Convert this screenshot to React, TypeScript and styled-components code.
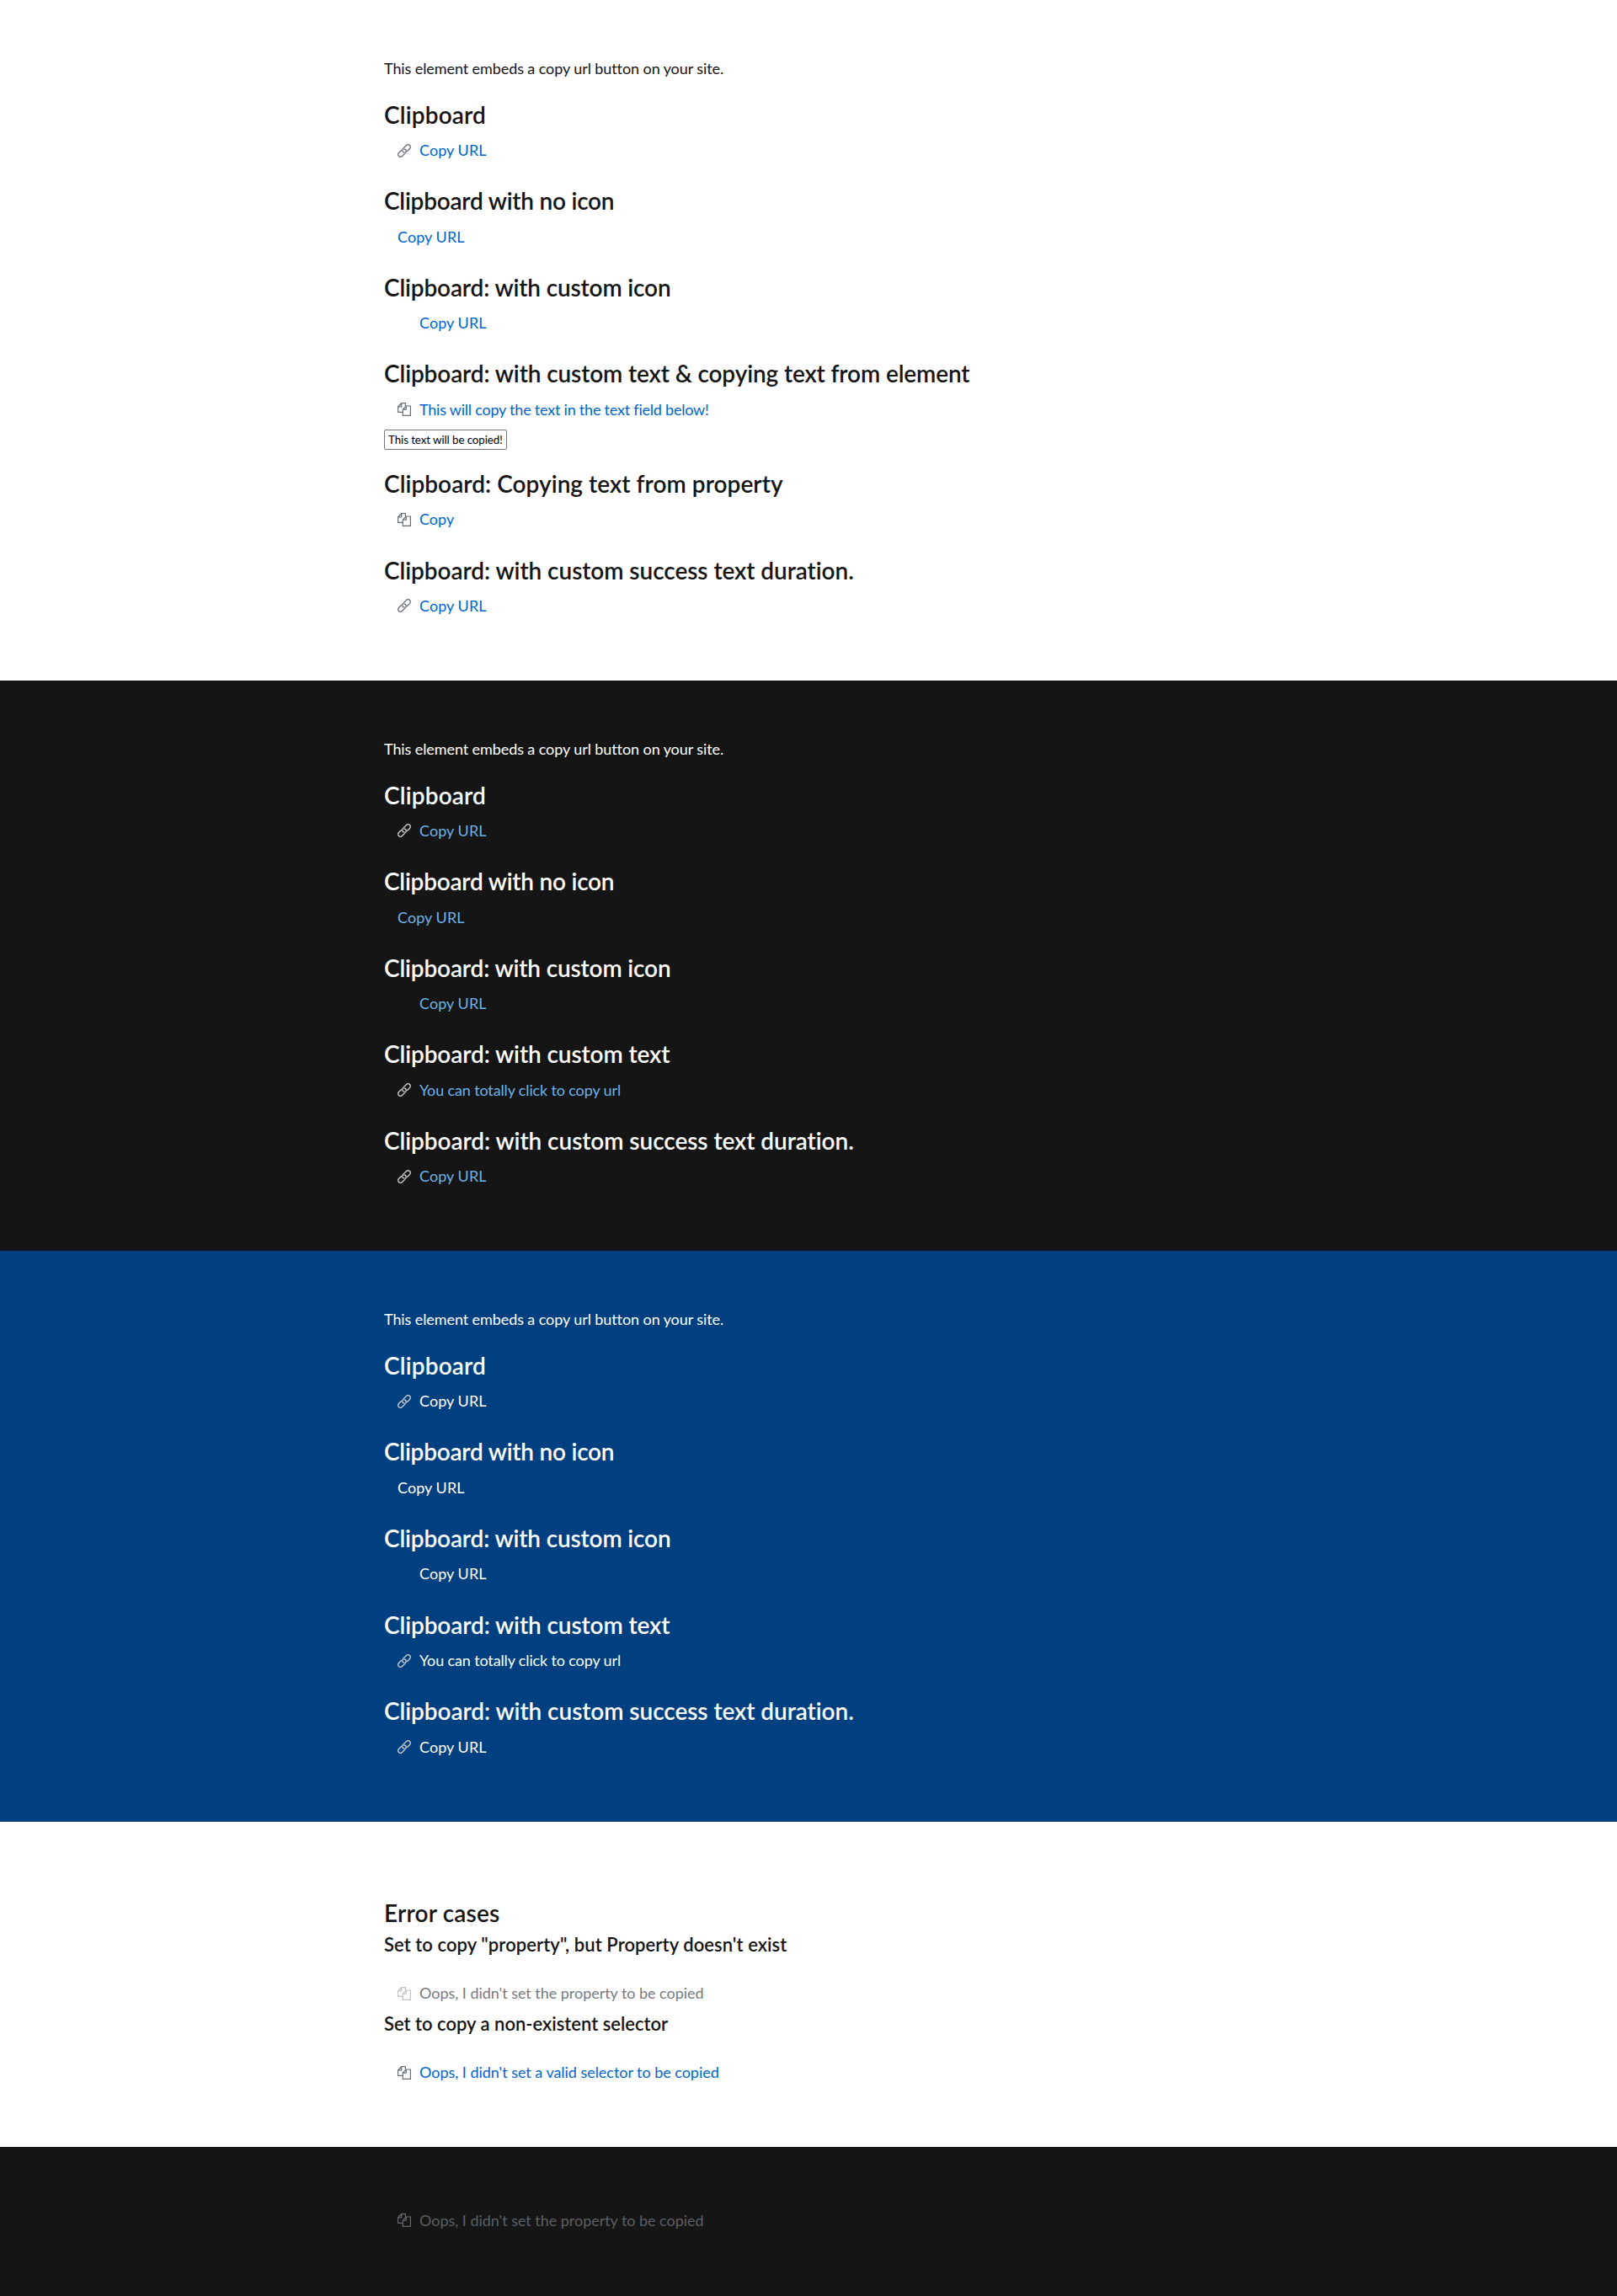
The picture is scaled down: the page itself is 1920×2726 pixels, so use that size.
import React from "react";
import styled, { createGlobalStyle, ThemeProvider } from "styled-components";

interface Palette {
  surface: string;
  text: string;
  link: string;
  icon: string;
  disabledText: string;
  disabledIcon: string;
}

const light: Palette = {
  surface: "#ffffff",
  text: "#151515",
  link: "#0066cc",
  icon: "#6a6e73",
  disabledText: "#787b80",
  disabledIcon: "#c3c5c7",
};

const dark: Palette = {
  surface: "#151515",
  text: "#ffffff",
  link: "#6cb2ea",
  icon: "#d2d2d2",
  disabledText: "#5c5f64",
  disabledIcon: "#66686b",
};

const saturated: Palette = {
  surface: "#004080",
  text: "#ffffff",
  link: "#ffffff",
  icon: "#d2d2d2",
  disabledText: "#d2d2d2",
  disabledIcon: "#d2d2d2",
};

const GlobalStyle = createGlobalStyle`
  *, *::before, *::after { box-sizing: border-box; }
  body {
    margin: 0;
    background: #ffffff;
    font-family: Lato, "Liberation Sans", sans-serif;
    font-size: 18px;
    line-height: 27px;
  }
`;

const Page = styled.main`
  display: flex;
  flex-direction: column;
`;

const Band = styled.section<{ $top: number; $bottom: number }>`
  display: flex;
  justify-content: center;
  padding: ${(p) => p.$top}px 16px ${(p) => p.$bottom}px;
  background: ${(p) => (p.theme as Palette).surface};
  color: ${(p) => (p.theme as Palette).text};
`;

const Container = styled.div`
  display: flex;
  flex-direction: column;
  align-items: flex-start;
  width: 1008px;
`;

const Intro = styled.p`
  margin: 0 0 22.7px;
  letter-spacing: -0.09px;
`;

const Example = styled.div<{ $after?: number }>`
  display: flex;
  flex-direction: column;
  align-items: flex-start;
  margin-bottom: ${(p) => p.$after ?? 28.2}px;
`;

const Heading = styled.h2<{ $track?: number }>`
  margin: 0;
  font-size: 28px;
  font-weight: 600;
  line-height: 36.4px;
  letter-spacing: ${(p) => p.$track ?? 0}px;
  white-space: nowrap;
`;

const SubHeading = styled.h3<{ $track?: number }>`
  margin: 0 0 29.3px;
  font-size: 22px;
  font-weight: 600;
  line-height: 30px;
  letter-spacing: ${(p) => p.$track ?? 0}px;
  white-space: nowrap;
`;

const CopyButton = styled.button<{ $track?: number }>`
  display: flex;
  align-items: center;
  gap: 10px;
  margin: 0;
  padding: 0 16px;
  border: 0;
  background: transparent;
  color: ${(p) => (p.theme as Palette).link};
  font: inherit;
  letter-spacing: ${(p) => p.$track ?? 0}px;
  white-space: nowrap;
  cursor: pointer;

  &:disabled {
    color: ${(p) => (p.theme as Palette).disabledText};
    cursor: default;
  }

  ${Heading} + & {
    margin-top: 11px;
  }
`;

const IconSlot = styled.span`
  display: block;
  width: 16px;
  height: 16px;
  color: ${(p) => (p.theme as Palette).icon};

  ${CopyButton}:disabled & {
    color: ${(p) => (p.theme as Palette).disabledIcon};
  }

  svg {
    display: block;
    width: 16px;
    height: 16px;
    fill: none;
    stroke: currentColor;
    overflow: visible;
  }
`;

const TextField = styled.input`
  width: 146px;
  height: 24px;
  margin: 10.3px 0 0;
  padding: 1px 4px;
  border: 1px solid #767676;
  border-radius: 2px;
  background: #ffffff;
  color: #000000;
  font-family: inherit;
  font-size: 13.333px;
  letter-spacing: -0.08px;
`;

const ErrorCase = styled.div`
  display: flex;
  flex-direction: column;
  align-items: flex-start;
  margin-top: 4.8px;

  & + & {
    margin-top: 8px;
  }
`;

const LinkIcon = () => (
  <svg viewBox="0 0 16 16" strokeWidth="1.3" strokeLinecap="round">
    <g transform="translate(8 8) rotate(-45)">
      <path d="M2.2 2.8H6.4A2.8 2.8 0 0 0 6.4-2.8H.6A2.8 2.8 0 0 0-2 .6Q-1.8 1.1-1.2 1.2" />
      <path d="M-2.2-2.8H-6.4A2.8 2.8 0 0 0-6.4 2.8H-.6A2.8 2.8 0 0 0 2-.6Q1.8-1.1 1.2-1.2" />
    </g>
  </svg>
);

const CopyIcon = () => (
  <svg viewBox="0 0 16 16" strokeWidth="1.2">
    <path d="M9.4 4.2V.6H4.7L.6 4.8V11.4H6M.6 4.8H4.7V.6" />
    <path d="M6.3 8.2 10.3 4H15.4V15.4H6.3ZM6.3 8.2H10.3V4" />
  </svg>
);

type IconKind = "link" | "copy" | "blank" | "none";

interface ClipboardProps {
  label?: string;
  icon?: IconKind;
  track?: number;
  disabled?: boolean;
}

const Clipboard = ({ label = "Copy URL", icon = "link", track = 0.05, disabled }: ClipboardProps) => (
  <CopyButton type="button" $track={track} disabled={disabled}>
    {icon !== "none" && (
      <IconSlot>
        {icon === "link" && <LinkIcon />}
        {icon === "copy" && <CopyIcon />}
      </IconSlot>
    )}
    {label}
  </CopyButton>
);

const CommonExamples = () => (
  <>
    <Intro>This element embeds a copy url button on your site.</Intro>
    <Example>
      <Heading $track={0.15}>Clipboard</Heading>
      <Clipboard />
    </Example>
    <Example>
      <Heading $track={-0.24}>Clipboard with no icon</Heading>
      <Clipboard icon="none" />
    </Example>
    <Example>
      <Heading $track={-0.16}>Clipboard: with custom icon</Heading>
      <Clipboard icon="blank" />
    </Example>
  </>
);

const DurationExample = () => (
  <Example>
    <Heading $track={-0.07}>Clipboard: with custom success text duration.</Heading>
    <Clipboard />
  </Example>
);

const CustomTextExample = () => (
  <Example>
    <Heading $track={-0.11}>Clipboard: with custom text</Heading>
    <Clipboard label="You can totally click to copy url" track={-0.14} />
  </Example>
);

const MissingProperty = () => (
  <Clipboard icon="copy" label="Oops, I didn't set the property to be copied" track={-0.04} disabled />
);

export default function App() {
  return (
    <Page>
      <GlobalStyle />
      <ThemeProvider theme={light}>
        <Band $top={68} $bottom={46.7}>
          <Container>
            <CommonExamples />
            <Example $after={21.8}>
              <Heading $track={-0.13}>Clipboard: with custom text &amp; copying text from element</Heading>
              <Clipboard icon="copy" label="This will copy the text in the text field below!" track={-0.22} />
              <TextField defaultValue="This text will be copied!" aria-label="Text to copy" />
            </Example>
            <Example>
              <Heading $track={0.04}>Clipboard: Copying text from property</Heading>
              <Clipboard icon="copy" label="Copy" track={0} />
            </Example>
            <DurationExample />
          </Container>
        </Band>
      </ThemeProvider>
      {[dark, saturated].map((palette) => (
        <ThemeProvider theme={palette} key={palette.surface}>
          <Band $top={68} $bottom={46.7}>
            <Container>
              <CommonExamples />
              <CustomTextExample />
              <DurationExample />
            </Container>
          </Band>
        </ThemeProvider>
      ))}
      <ThemeProvider theme={light}>
        <Band $top={90} $bottom={74.7}>
          <Container>
            <Heading $track={0.18}>Error cases</Heading>
            <ErrorCase>
              <SubHeading $track={0.07}>Set to copy "property", but Property doesn't exist</SubHeading>
              <MissingProperty />
            </ErrorCase>
            <ErrorCase>
              <SubHeading>Set to copy a non-existent selector</SubHeading>
              <Clipboard icon="copy" label="Oops, I didn't set a valid selector to be copied" track={-0.04} />
            </ErrorCase>
          </Container>
        </Band>
      </ThemeProvider>
      <ThemeProvider theme={dark}>
        <Band $top={73.5} $bottom={76.5}>
          <Container>
            <MissingProperty />
          </Container>
        </Band>
      </ThemeProvider>
    </Page>
  );
}
